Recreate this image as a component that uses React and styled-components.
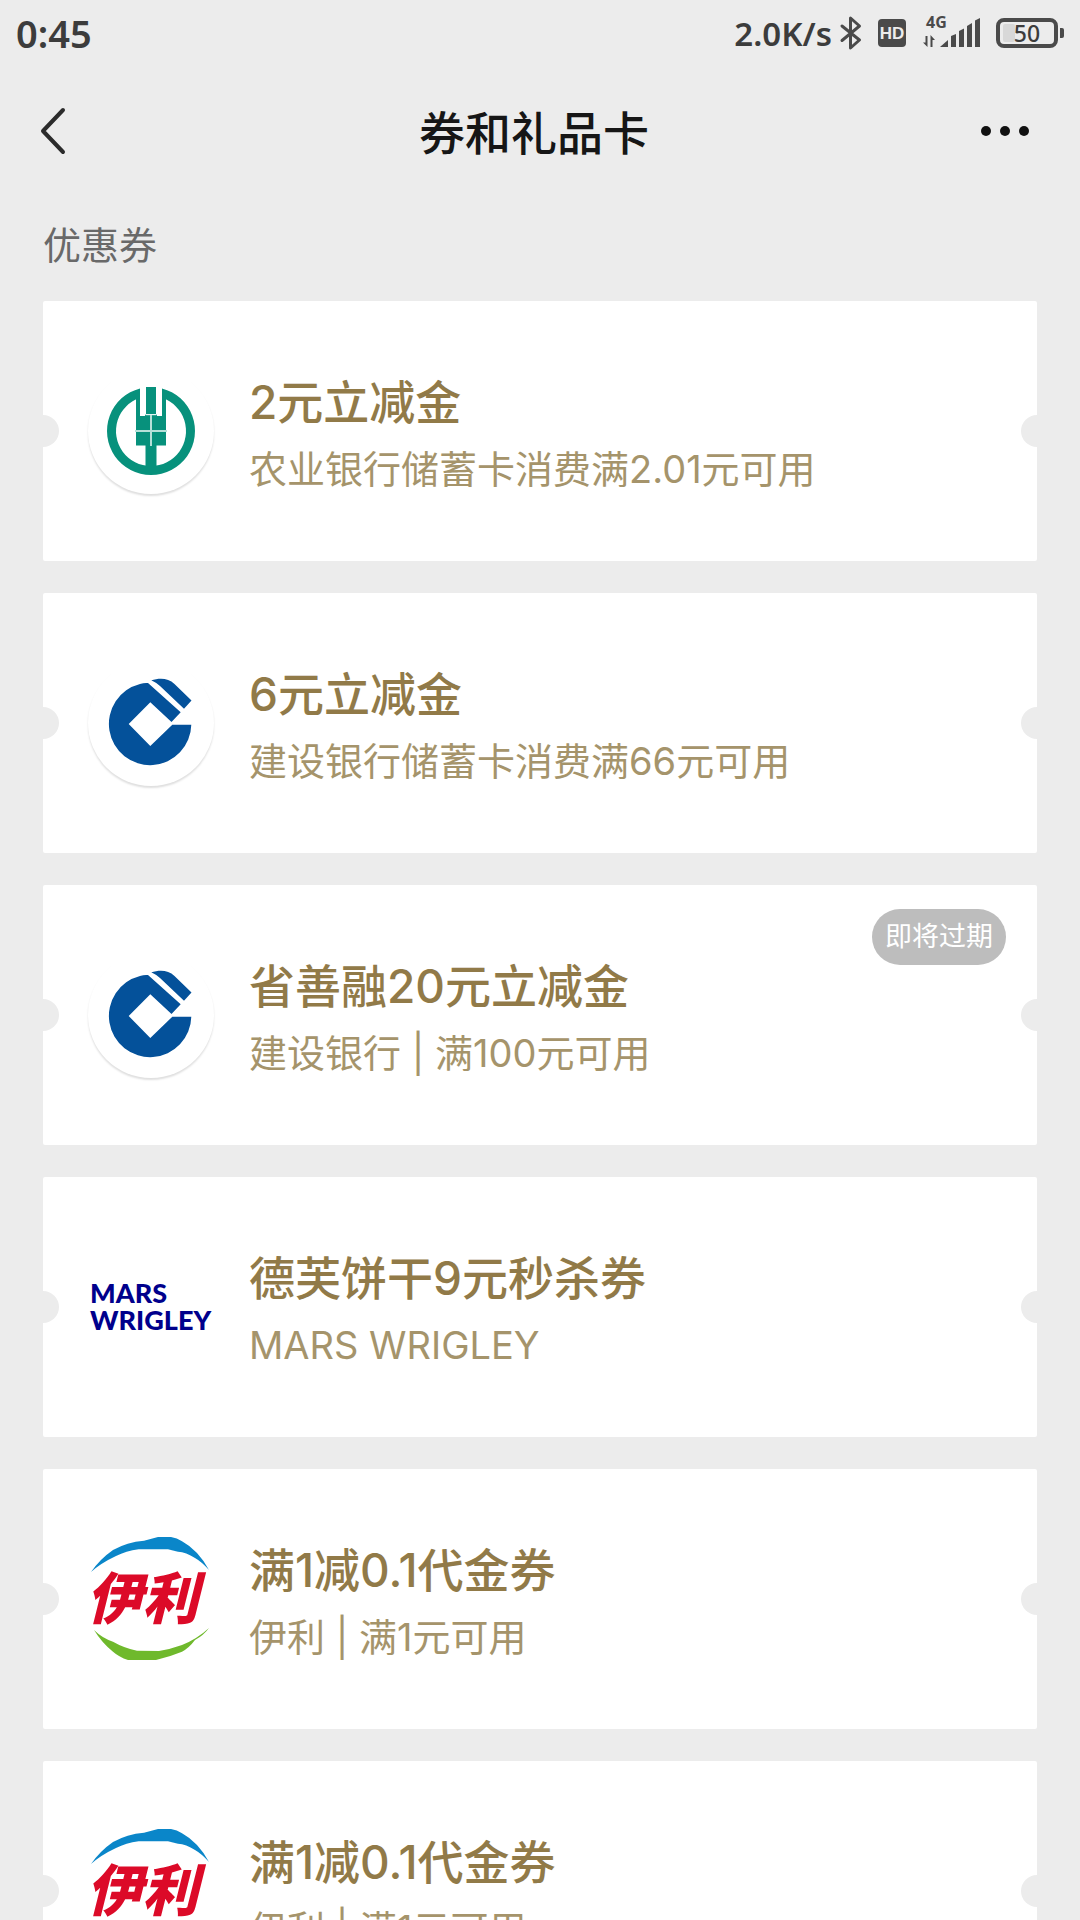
import React from 'react';
import styled, { createGlobalStyle } from 'styled-components';

const GlobalStyle = createGlobalStyle`
  * {
    box-sizing: border-box;
  }
  body {
    margin: 0;
    background: #ececec;
    font-family: Inter, 'Noto Sans CJK SC', sans-serif;
  }
`;

const Page = styled.div`
  display: flex;
  flex-direction: column;
  height: 100vh;
  overflow: hidden;
`;

const StatusBar = styled.div`
  display: flex;
  align-items: center;
  justify-content: space-between;
  height: 66px;
  padding: 0 16px;
  color: #3c3c3c;
  font-family: 'Noto Sans', sans-serif;
  font-size: 38px;
  font-weight: 600;
  svg {
    display: block;
    flex: none;
    overflow: visible;
  }
`;

const StatusIcons = styled.div`
  display: flex;
  align-items: center;
  gap: 16px;
`;

const Speed = styled.span`
  display: flex;
  align-items: center;
  gap: 8px;
  font-size: 33px;
`;

const NavBar = styled.header`
  display: grid;
  grid-template-columns: 112px 1fr 124px;
  align-items: center;
  height: 130px;
`;

const NavButton = styled.button`
  display: flex;
  align-items: center;
  justify-content: ${p => p.$end ? 'flex-end' : 'flex-start'};
  height: 100%;
  padding: ${p => p.$end ? '0 50px 0 0' : '0 0 0 40px'};
  border: 0;
  background: none;
  cursor: pointer;
`;

const NavTitle = styled.h1`
  margin: 0;
  padding-top: 4px;
  color: #161616;
  font-size: 46px;
  font-weight: 500;
  line-height: 64px;
  text-align: center;
`;

const Content = styled.main`
  flex: 1;
  min-height: 0;
  padding: 21px 43px 32px;
  overflow-y: auto;
  scrollbar-width: none;
`;

const SectionTitle = styled.h2`
  margin: 0 0 28px;
  color: #696969;
  font-size: 38px;
  font-weight: 400;
  line-height: 56px;
`;

const CouponList = styled.ul`
  display: flex;
  flex-direction: column;
  gap: 32px;
  margin: 0;
  padding: 0;
  list-style: none;
`;

const CouponCard = styled.a`
  position: relative;
  display: flex;
  align-items: center;
  gap: 35px;
  height: 260px;
  padding: 0 45px;
  border-radius: 2px;
  background: #fff;
  color: inherit;
  text-decoration: none;
  overflow: hidden;
  &::before,
  &::after {
    content: '';
    position: absolute;
    top: 114px;
    width: 32px;
    height: 32px;
    border-radius: 50%;
    background: #ececec;
  }
  &::before {
    left: -16px;
  }
  &::after {
    right: -16px;
  }
`;

const Logo = styled.span`
  flex: none;
  width: 126px;
  height: 126px;
  border-radius: 50%;
  box-shadow: ${p => p.$round ? '0 2px 2px rgba(0, 0, 0, .13)' : 'none'};
  svg {
    display: block;
    overflow: visible;
  }
`;

const CouponTitle = styled.h3`
  margin: 0;
  color: #917a48;
  font-size: 46px;
  font-weight: 500;
  line-height: 76px;
`;

const CouponDesc = styled.p`
  margin: 0;
  color: #a5946b;
  font-size: 38px;
  line-height: 58px;
`;

const Badge = styled.span`
  position: absolute;
  top: 24px;
  right: 31px;
  padding: 0 13px;
  border-radius: 28px;
  background: #bdbdbd;
  color: #fff;
  font-size: 27px;
  line-height: 56px;
`;

const BluetoothIcon = () => (
  <svg width="22" height="34" viewBox="0 0 22 34" fill="none" stroke="#4a4a4a" strokeWidth="3" strokeLinejoin="round" strokeLinecap="round">
    <path d="M2 10 L19.500 24 L10.500 32 V2 L19.500 10 L2 24.500" />
  </svg>
);

const HdIcon = () => (
  <svg width="28" height="28" viewBox="0 0 28 28">
    <rect width="28" height="28" rx="4" fill="#4a4a4a" />
    <text x="14" y="20" textAnchor="middle" fill="#ececec" fontFamily="Liberation Sans" fontSize="17" fontWeight="700">HD</text>
  </svg>
);

const SignalIcon = () => (
  <svg width="58" height="34" viewBox="0 0 58 34" fill="#4a4a4a">
    <text x="4" y="12" fontFamily="Noto Sans" fontSize="16" fontWeight="700">4G</text>
    <path d="M3.500 20 H5.500 V31 L1 26.500 H3.500 Z M8.500 31 V19 L13 24 H10.500 V31 Z" />
    <path d="M18 31 L26 24 V31 Z" />
    <path d="M29 20 L34 18 V31 H29 Z" />
    <path d="M37 15 L42 12.500 V31 H37 Z" />
    <path d="M45 10 L50 7 V31 H45 Z" />
    <path d="M53 4.500 L58 2 V31 H53 Z" />
  </svg>
);

const BatteryIcon = () => (
  <svg width="68" height="30" viewBox="0 0 68 30">
    <rect x="7" y="6" width="12" height="18" rx="2" fill="#d8d8d8" />
    <rect x="2" y="2" width="58" height="26" rx="6" fill="none" stroke="#4a4a4a" strokeWidth="4" />
    <path d="M64 10 h2 a2 2 0 0 1 2 2 v6 a2 2 0 0 1 -2 2 h-2 Z" fill="#4a4a4a" />
    <text x="31" y="24" textAnchor="middle" fill="#3c3c3c" fontFamily="Noto Sans" fontSize="23" fontWeight="500">50</text>
  </svg>
);

const BackIcon = () => (
  <svg width="26" height="48" viewBox="0 0 26 48" fill="none" stroke="#2b2b2b" strokeWidth="4" strokeLinecap="round" strokeLinejoin="round">
    <path d="M23 3 L3 24 L23 45" />
  </svg>
);

const MoreIcon = () => (
  <svg width="50" height="12" viewBox="0 0 50 12" fill="#111">
    <circle cx="6" cy="6" r="5" />
    <circle cx="25" cy="6" r="5" />
    <circle cx="44" cy="6" r="5" />
  </svg>
);

const AbcLogo = () => (
  <svg width="126" height="126" viewBox="0 0 126 126" fill="#07917c">
    <path d="M52 20.400 A44 44 0 1 0 74 20.400 V29.800 A35 35 0 1 1 52 29.800 Z" />
    <path d="M48 27 H52 V48 H57 V46.500 H69 V48 H74 V27 H78 V77.500 H68.500 V100 H57.500 V77.500 H48 Z" />
    <rect x="58" y="19" width="10" height="27" />
    <path d="M57.500 46.700 H68.500" stroke="#fff" strokeWidth="1" />
    <path d="M63 47 V78 M47 63 H79" stroke="#b5e0d8" strokeWidth="2" />
  </svg>
);

const CcbLogo = () => (
  <svg width="126" height="126" viewBox="0 0 126 126" fill="#04519a">
    <path d="M60 23 L92.700 52.300 L83.500 62 L62.300 42.300 L40.700 64 L62.300 86 L84.300 64.700 H103.300 A41.200 41.200 0 1 1 52 24 Q56 22.600 60 23 Z" />
    <path d="M63.300 20.300 C71 18 80 17.500 86.500 24 L103.500 40.500 L96 48.700 L72 26 Q68 22.500 63.300 20.300 Z" />
  </svg>
);

const MarsLogo = () => (
  <svg width="126" height="126" viewBox="0 0 126 126" fill="#00008c" fontFamily="Lato" fontSize="27" fontWeight="900">
    <text x="2" y="59">MARS</text>
    <text x="2" y="86">WRIGLEY</text>
  </svg>
);

const YiliLogo = () => (
  <svg width="126" height="126" viewBox="0 0 126 126">
    <path d="M3 36 Q12 23 25 14 Q39 6 56 4.700 L70 1 H83 Q89 2 94 5.300 Q110 14 121 34 Q114 26 107 22 Q98 16 90 15.700 L80 13.300 H50.600 Q38 15 28 20 Q13 27 3 36 Z" fill="#0a86c9" />
    <path d="M6 94 Q14 102 25 105.700 Q36 112 49 114.700 L71 115 Q83 113 94 109 Q109 103 121 92 Q116 99 107 104 Q101 112 94 115.700 Q81 121 68 124 H40 Q31 121 25 115.700 Q14 107 6 94 Z" fill="#6fb92c" />
    <text x="54" y="83" textAnchor="middle" fill="#dc0a28" fontFamily="Noto Sans CJK SC" fontSize="56" fontWeight="900" fontStyle="italic">伊利</text>
  </svg>
);

const coupons = [
  { id: 1, title: '2元立减金', desc: '农业银行储蓄卡消费满2.01元可用', logo: AbcLogo, round: true },
  { id: 2, title: '6元立减金', desc: '建设银行储蓄卡消费满66元可用', logo: CcbLogo, round: true },
  { id: 3, title: '省善融20元立减金', desc: '建设银行 | 满100元可用', logo: CcbLogo, round: true, badge: '即将过期' },
  { id: 4, title: '德芙饼干9元秒杀券', desc: 'MARS WRIGLEY', logo: MarsLogo },
  { id: 5, title: '满1减0.1代金券', desc: '伊利 | 满1元可用', logo: YiliLogo },
  { id: 6, title: '满1减0.1代金券', desc: '伊利 | 满1元可用', logo: YiliLogo },
];

const Coupon = ({ title, desc, logo: LogoImage, round, badge }) => (
  <li>
    <CouponCard href='#'>
      <Logo $round={round}><LogoImage /></Logo>
      <div>
        <CouponTitle>{title}</CouponTitle>
        <CouponDesc>{desc}</CouponDesc>
      </div>
      {badge && <Badge>{badge}</Badge>}
    </CouponCard>
  </li>
);

const App = () => {
  return (
    <Page>
      <GlobalStyle />
      <StatusBar>
        <span>0:45</span>
        <StatusIcons>
          <Speed>2.0K/s <BluetoothIcon /></Speed>
          <HdIcon />
          <SignalIcon />
          <BatteryIcon />
        </StatusIcons>
      </StatusBar>
      <NavBar>
        <NavButton type='button' aria-label='返回'><BackIcon /></NavButton>
        <NavTitle>券和礼品卡</NavTitle>
        <NavButton type='button' aria-label='更多' $end><MoreIcon /></NavButton>
      </NavBar>
      <Content>
        <SectionTitle>优惠券</SectionTitle>
        <CouponList>
          {coupons.map(c => <Coupon key={c.id} {...c} />)}
        </CouponList>
      </Content>
    </Page>
  );
}

export default App;
